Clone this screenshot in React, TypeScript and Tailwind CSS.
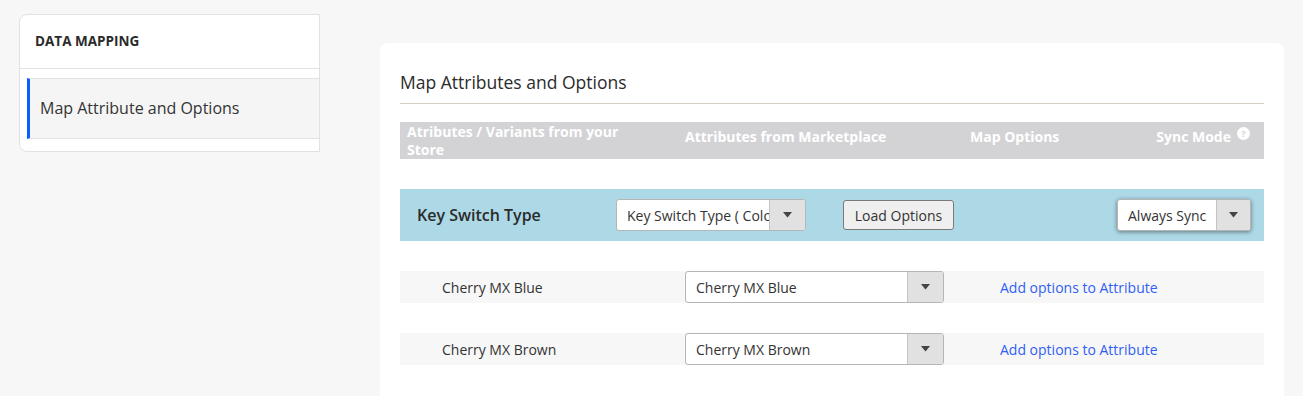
import React from "react"

const Caret = () => (
  <svg width="9" height="6" viewBox="0 0 9 6" className="block">
    <path d="M0 0 L9 0 L4.5 5.5 Z" fill="#444" />
  </svg>
)

const Select = ({ text, width, arrow = 36, shadow = false }: { text: string; width: string; arrow?: number; shadow?: boolean }) => (
  <div
    className={`flex h-[32px] ${width} overflow-hidden rounded-[3px] border border-[#b5b5b5] bg-white ${shadow ? "shadow-[0_1px_4px_rgba(0,0,0,0.45)]" : ""}`}
  >
    <div className="flex min-w-0 flex-1 items-center overflow-hidden whitespace-nowrap pl-[10px] text-[14px] text-[#333]">
      {text}
    </div>
    <div
      className="flex shrink-0 items-center justify-center border-l border-[#c4c4c4] bg-[#e1e1e1]"
      style={{ width: arrow }}
    >
      <Caret />
    </div>
  </div>
)

const App = () => {
  const options = ["Cherry MX Blue", "Cherry MX Brown"]

  return (
    <div className="flex min-h-[396px] bg-[#f7f7f7] font-['Open_Sans',sans-serif] text-[#333]">
      {/* sidebar */}
      <div className="ml-[19px] mt-[14px] h-[138px] w-[301px] shrink-0 rounded-l-[8px] border border-[#e2e2e2] bg-white">
        <div className="flex h-[54px] items-center border-b border-[#e2e2e2] pl-[15px] text-[13.5px] font-bold text-[#2b2b2b]">
          DATA MAPPING
        </div>
        <div className="ml-[7px] mt-[9px] flex h-[61px] items-center border-y border-l-[3px] border-y-[#e2e2e2] border-l-[#0a5fff] bg-[#f5f5f5] pb-[1px] pl-[10px] text-[16px] font-medium text-[#333]">
          Map Attribute and Options
        </div>
      </div>

      {/* main */}
      <div className="ml-[60px] mt-[43px] w-[904px] shrink-0 rounded-t-[8px] bg-white px-[20px] pt-[27px]">
        <div className="border-b border-[#d3cdc6] pb-[9px] text-[17.5px] font-medium leading-[24px] text-[#2b2b2b]">
          Map Attributes and Options
        </div>

        {/* header */}
        <div className="mt-[18px] flex h-[37px] bg-[#d3d3d6] text-[14px] font-bold leading-[18px] text-white">
          <div className="w-[285px] pl-[7px] pt-[1px]">
            <div className="w-[222px]">Atributes / Variants from your Store</div>
          </div>
          <div className="w-[285px] pt-[6px]">Attributes from Marketplace</div>
          <div className="flex-1 pt-[6px]">Map Options</div>
          <div className="flex items-start pr-[14px] pt-[6px]">
            Sync Mode
            <span className="-mt-[1px] ml-[6px] flex h-[13px] w-[13px] items-center justify-center rounded-full bg-white text-[9px] font-bold leading-none text-[#d3d3d6]">
              ?
            </span>
          </div>
        </div>

        {/* attribute row */}
        <div className="mt-[30px] flex h-[52px] items-center bg-[#add8e6]">
          <div className="w-[216px] pl-[17px] text-[16px] font-semibold text-[#2b2b2b]">Key Switch Type</div>
          <Select text="Key Switch Type ( Color )" width="w-[190px]" />
          <button className="ml-[37px] h-[30px] w-[111px] rounded-[3px] border border-[#7a7a7a] bg-[#efefef] text-[14px] text-[#333]">
            Load Options
          </button>
          <div className="flex-1" />
          <div className="mr-[13px]">
            <Select text="Always Sync" width="w-[134px]" arrow={34} shadow />
          </div>
        </div>

        {/* option rows */}
        {options.map((opt) => (
          <div key={opt} className="mt-[30px] flex h-[32px] items-center bg-[#f7f7f7]">
            <div className="w-[285px] pl-[42px] text-[14px] text-[#333]">{opt}</div>
            <Select text={opt} width="w-[259px]" />
            <a className="ml-[56px] cursor-pointer text-[14px] text-[#2f5ff5]">Add options to Attribute</a>
          </div>
        ))}
      </div>
    </div>
  )
}

export default App
